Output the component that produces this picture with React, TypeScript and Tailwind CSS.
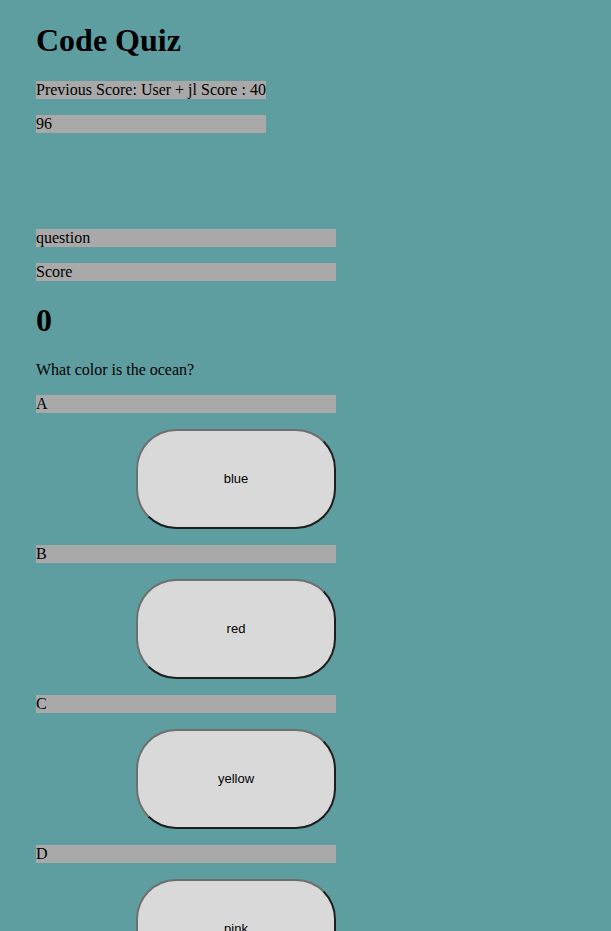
const answers = [
  { letter: 'A', text: 'blue' },
  { letter: 'B', text: 'red' },
  { letter: 'C', text: 'yellow' },
  { letter: 'D', text: 'pink' },
];

const bar = 'h-[18px] bg-[#a9a9a9] text-[16px] leading-[18px] text-black';

export default function App() {
  return (
    <div className="min-h-screen bg-[#5f9ea0] px-[36px] pt-[22px] pb-8 font-['Liberation_Serif',serif] text-black">
      <h1 className="h-[37px] text-[32px] font-bold leading-[37px]">Code Quiz</h1>
      <div className="mt-[22px] flex w-[230px] flex-col gap-4">
        <div className={bar}>Previous Score: User + jl Score : 40</div>
        <div className={bar}>96</div>
      </div>

      <div className="mt-[96px] flex w-[300px] flex-col">
        <div className={bar}>question</div>
        <div className={`${bar} mt-4`}>Score</div>
        <h1 className="mt-[21px] h-[37px] text-[32px] font-bold leading-[37px]">0</h1>
        <p className="mt-[22px] h-[18px] text-[16px] leading-[18px]">What color is the ocean?</p>

        {answers.map((a) => (
          <div key={a.letter} className="mt-4 flex flex-col">
            <div className={bar}>{a.letter}</div>
            <button
              type="button"
              className="mt-4 ml-[100px] h-[100px] w-[200px] rounded-[40px] border-2 border-t-[#6f6f6f] border-l-[#6f6f6f] border-r-[#1e1e1e] border-b-[#1e1e1e] bg-[#d9d9d9] font-['Liberation_Sans',Arial,sans-serif] text-[13px] text-black"
            >
              {a.text}
            </button>
          </div>
        ))}
      </div>
    </div>
  );
}
